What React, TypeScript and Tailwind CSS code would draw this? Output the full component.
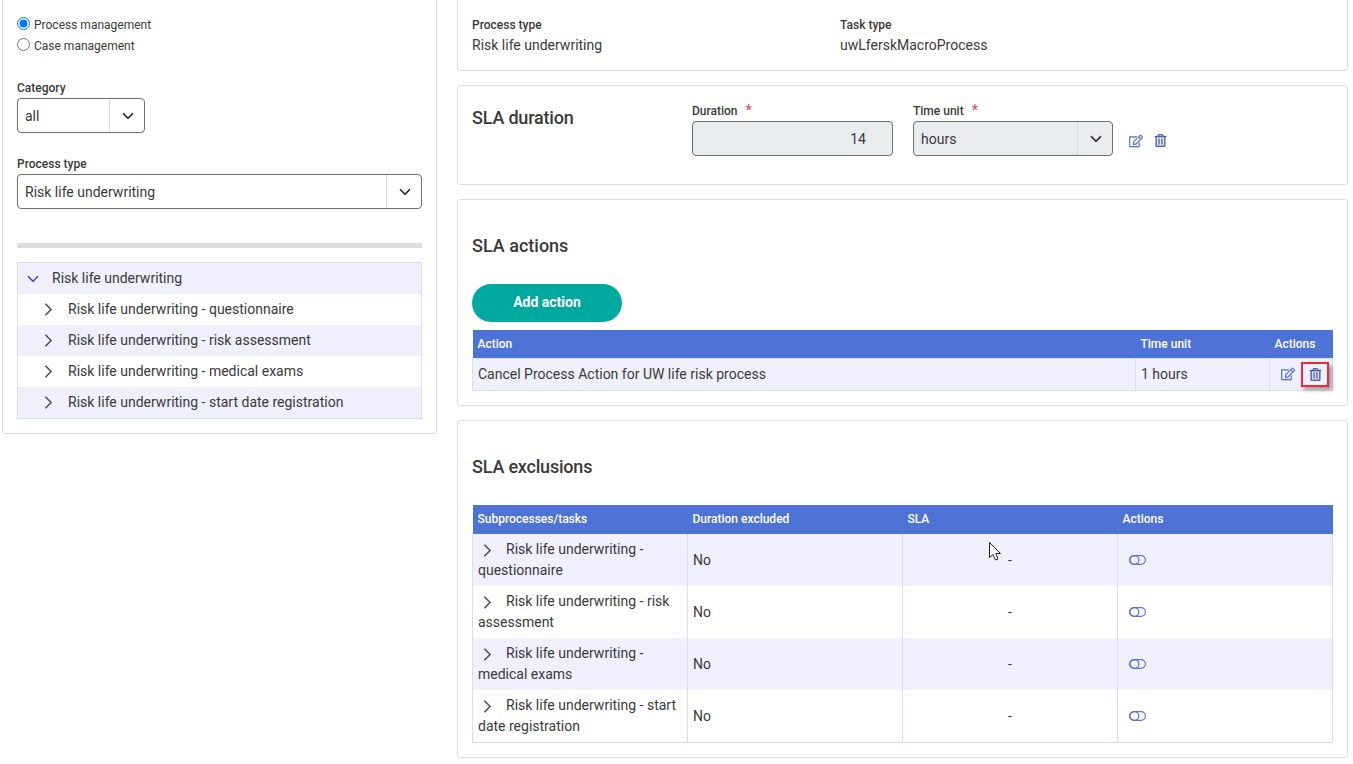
import { ChevronDown, ChevronRight } from 'lucide-react';
import { FaRegEdit, FaRegTrashAlt } from 'react-icons/fa';

const subprocesses = [
  { full: 'Risk life underwriting - questionnaire' },
  { full: 'Risk life underwriting - risk assessment' },
  { full: 'Risk life underwriting - medical exams' },
  { full: 'Risk life underwriting - start date registration' },
];

function SelectBox({ value, width, filled }: { value: string; width: string; filled?: boolean }) {
  return (
    <div className={`flex h-[35px] items-stretch rounded-[4px] border border-[#6f6f6f] text-[14px] ${width} ${filled ? 'bg-[#e9ecef]' : 'bg-white'}`}>
      <div className="flex flex-1 items-center pl-[7px] pt-[1px]">{value}</div>
      <div className="flex w-[35px] items-center justify-center border-l border-[#d9d9d9] pl-[1px]">
        <ChevronDown size={18} strokeWidth={2.2} className="text-[#222]" />
      </div>
    </div>
  );
}

function TrashIcon({ className }: { className: string }) {
  return <FaRegTrashAlt size={13} stroke="currentColor" strokeWidth={12} className={className} />;
}

function EditIcon({ className }: { className?: string }) {
  return <FaRegEdit size={14} stroke="currentColor" strokeWidth={8} className={className} />;
}

function ToggleIcon() {
  return (
    <svg width="17" height="10" viewBox="0 0 17 10" fill="none" stroke="#5f72d8" strokeWidth="1.2" className="block">
      <rect x="0.6" y="0.6" width="15.8" height="8.8" rx="4.4" />
      <circle cx="5.4" cy="5" r="4.4" />
    </svg>
  );
}

function Card({ className, children }: { className?: string; children: React.ReactNode }) {
  return <section className={`rounded-[3px] border border-[#dedede] bg-white ${className ?? ''}`}>{children}</section>;
}

export default function App() {
  return (
    <div className="relative h-[764px] w-[1353px] overflow-hidden bg-white font-['Roboto',sans-serif] text-[#3a3a3a]">
      <div className="-mt-[10px] flex items-start pl-[2px]">
        {/* filters */}
        <aside className="h-[444px] w-[435px] rounded-[3px] border border-[#dedede] px-[14px] pt-[23px]">
          <label className="flex h-[21px] items-center gap-[3px] text-[12px]">
            <input type="radio" name="mode" defaultChecked className="m-0 -mt-[3px] h-[13px] w-[13px]" />
            <span className="ml-[1px]">Process management</span>
          </label>
          <label className="flex h-[21px] items-center gap-[3px] text-[12px]">
            <input type="radio" name="mode" className="m-0 -mt-[3px] h-[13px] w-[13px]" />
            <span className="ml-[1px]">Case management</span>
          </label>

          <div className="mt-[23px] h-[19px] text-[12px] font-medium leading-[18px]">Category</div>
          <SelectBox value="all" width="w-[128px]" />

          <div className="mt-[22px] h-[19px] text-[12px] font-medium leading-[18px]">Process type</div>
          <SelectBox value="Risk life underwriting" width="w-[405px]" />

          <div className="mt-[34px] h-[5px] w-[405px] bg-[#dddddd]" />

          <div className="mt-[14px] w-[405px] border border-[#d8dcf8] text-[14px]">
            <div className="flex h-[31px] items-center bg-[#f0f0fc] pl-[6px]">
              <ChevronDown size={18} strokeWidth={2.2} className="text-[#3f51b5]" />
              <span className="ml-[10px]">Risk life underwriting</span>
            </div>
            {subprocesses.map((s, i) => (
              <div key={s.full} className={`flex h-[31px] items-center pl-[20px] ${i % 2 === 0 ? 'bg-white' : 'bg-[#f0f0fc]'}`}>
                <ChevronRight size={21} strokeWidth={2} className="text-[#555]" />
                <span className="ml-[9px]">{s.full}</span>
              </div>
            ))}
          </div>
        </aside>

        <main className="ml-[20px] flex w-[891px] flex-col gap-[14px]">
          <Card className="flex h-[81px] px-[14px] pt-[25px]">
            <div className="w-[368px]">
              <div className="h-[19px] text-[12px] font-medium leading-[18px]">Process type</div>
              <div className="text-[14px] leading-[20px]">Risk life underwriting</div>
            </div>
            <div>
              <div className="h-[19px] text-[12px] font-medium leading-[18px]">Task type</div>
              <div className="text-[14px] leading-[20px]">uwLferskMacroProcess</div>
            </div>
          </Card>

          <Card className="flex h-[100px] px-[14px] pt-[16px]">
            <h2 className="w-[220px] pt-[3px] text-[18px] font-medium leading-[26px] tracking-[-0.2px]">SLA duration</h2>
            <div className="w-[221px]">
              <div className="h-[19px] text-[12px] font-medium leading-[18px]">
                Duration <span className="ml-[5px] text-[14px] leading-none text-[#e2506a]">*</span>
              </div>
              <div className="flex h-[35px] w-[201px] items-center justify-end rounded-[4px] border border-[#6f6f6f] bg-[#e9ecef] pr-[26px] pt-[1px] text-[14px]">14</div>
            </div>
            <div>
              <div className="h-[19px] text-[12px] font-medium leading-[18px]">
                Time unit <span className="ml-[5px] text-[14px] leading-none text-[#e2506a]">*</span>
              </div>
              <SelectBox value="hours" width="w-[200px]" filled />
            </div>
            <div className="ml-[16px] mt-[19px] flex h-[35px] items-center gap-[11px] self-start pt-[4px] text-[#5f79c6]">
              <EditIcon />
              <TrashIcon className="text-[#4f63a8]" />
            </div>
          </Card>

          <Card className="h-[207px] px-[14px] pt-[33px]">
            <h2 className="text-[18px] font-medium leading-[26px]">SLA actions</h2>
            <button className="mt-[25px] block h-[38px] w-[150px] rounded-[19px] bg-[#00a99d] pb-[2px] text-[14px] font-bold text-white">Add action</button>
            <table className="mt-[8px] w-[860px] table-fixed border-collapse text-[14px]">
              <colgroup>
                <col className="w-[663px]" />
                <col className="w-[134px]" />
                <col className="w-[63px]" />
              </colgroup>
              <thead>
                <tr className="h-[28px] bg-[#4e73d6] text-left text-[12px] text-white">
                  <th className="px-[5px] pt-[1px] font-medium">Action</th>
                  <th className="px-[5px] pt-[1px] font-medium">Time unit</th>
                  <th className="px-[5px] pt-[1px] font-medium">Actions</th>
                </tr>
              </thead>
              <tbody>
                <tr className="h-[32px] bg-[#f0f0fc]">
                  <td className="border border-[#d8dcf5] px-[5px]">Cancel Process Action for UW life risk process</td>
                  <td className="border border-[#d8dcf5] px-[5px]">1 hours</td>
                  <td className="border border-[#d8dcf5] pl-[11px]">
                    <div className="flex items-center">
                      <EditIcon className="text-[#5f79c6]" />
                      <span className="relative ml-[6px] flex h-[25px] w-[28px] shrink-0 items-center justify-center border-2 border-[#f02a35] shadow-[3px_3px_4px_rgba(0,0,0,0.35)]">
                        <TrashIcon className="text-[#4f63a8]" />
                      </span>
                    </div>
                  </td>
                </tr>
              </tbody>
            </table>
          </Card>

          <Card className="h-[338px] px-[14px] pt-[33px]">
            <h2 className="text-[18px] font-medium leading-[26px] tracking-[-0.2px]">SLA exclusions</h2>
            <table className="mt-[25px] w-[860px] table-fixed border-collapse text-[14px]">
              <colgroup>
                <col className="w-[215px]" />
                <col className="w-[215px]" />
                <col className="w-[215px]" />
                <col className="w-[215px]" />
              </colgroup>
              <thead>
                <tr className="h-[29px] bg-[#4e73d6] text-left text-[12px] text-white">
                  <th className="px-[5px] pb-[2px] font-medium">Subprocesses/tasks</th>
                  <th className="px-[5px] pb-[2px] font-medium">Duration excluded</th>
                  <th className="px-[5px] pb-[2px] font-medium">SLA</th>
                  <th className="px-[5px] pb-[2px] font-medium">Actions</th>
                </tr>
              </thead>
              <tbody>
                {subprocesses.map((s, i) => (
                  <tr key={s.full} className={`h-[52px] border-b ${i === subprocesses.length - 1 ? 'border-[#d8dcf5]' : 'border-transparent'} ${i % 2 === 0 ? 'bg-[#f0f0fc]' : 'bg-white'}`}>
                    <td className="border-x border-[#d8dcf5] px-[5px] leading-[21px]">
                      <ChevronRight size={21} strokeWidth={2} className="-my-[4px] -ml-[1px] mr-[8px] inline align-middle text-[#555]" />
                      {s.full}
                    </td>
                    <td className="border-x border-[#d8dcf5] px-[5px] pt-[1px]">No</td>
                    <td className="border-x border-[#d8dcf5] px-[5px] pt-[1px] text-center">-</td>
                    <td className="border-x border-[#d8dcf5] pl-[11px]">
                      <ToggleIcon />
                    </td>
                  </tr>
                ))}
              </tbody>
            </table>
          </Card>
        </main>
      </div>

      {/* mouse pointer caught in the capture */}
      <svg className="absolute left-[989px] top-[542px]" width="14" height="20" viewBox="0 0 14 20">
        <path d="M0.5 0.5 V15.5 L4 12.5 L6.5 18 L9 17 L6.8 11.5 H11.5 Z" fill="#fff" stroke="#222" strokeWidth="1" />
      </svg>
    </div>
  );
}
